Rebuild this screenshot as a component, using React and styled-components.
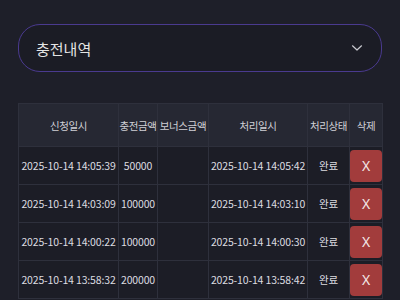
import React from 'react';
import styled, { createGlobalStyle } from 'styled-components';

const GlobalStyle = createGlobalStyle`
  html, body {
    margin: 0;
    padding: 0;
    background: #1e1f29;
  }
  body {
    font-family: "Noto Sans CJK KR", "Noto Sans", sans-serif;
    color: #dcdcdc;
  }
`;

const Page = styled.div`
  padding: 24px 18px 0;
`;

const Select = styled.div`
  height: 46px;
  display: flex;
  align-items: center;
  justify-content: space-between;
  padding: 0 18px 0 17px;
  border: 1.5px solid #4a3a8f;
  border-radius: 22px;
  background: #1b1c25;
  font-size: 15px;
  color: #e4e4e4;
`;

const Chevron = styled.svg`
  width: 12px;
  height: 8px;
  color: #c9c9d0;
`;

const Table = styled.table`
  margin-top: 31px;
  width: 364px;
  border-collapse: collapse;
  table-layout: fixed;
  font-size: 10.5px;
  letter-spacing: -0.15px;
`;

const Th = styled.th`
  height: 42px;
  padding: 0;
  background: #262833;
  border: 1px solid #2e303c;
  font-weight: 400;
  color: #d0d0d6;
  white-space: nowrap;
  text-align: center;
  letter-spacing: -0.4px;
`;

const Td = styled.td`
  height: 37px;
  padding: 0;
  background: #1c1d26;
  border: 1px solid #2e303c;
  color: #dcdce0;
  white-space: nowrap;
  text-align: center;
`;

const DeleteButton = styled.button`
  width: 32px;
  height: 32px;
  border: none;
  border-radius: 4px;
  background: #a23c3c;
  color: #f2e6e6;
  font-family: "Noto Sans", sans-serif;
  font-size: 14px;
  padding: 0;
  cursor: pointer;
`;

const rows = [
  { req: '2025-10-14 14:05:39', amount: '50000', bonus: '', done: '2025-10-14 14:05:42', status: '완료' },
  { req: '2025-10-14 14:03:09', amount: '100000', bonus: '', done: '2025-10-14 14:03:10', status: '완료' },
  { req: '2025-10-14 14:00:22', amount: '100000', bonus: '', done: '2025-10-14 14:00:30', status: '완료' },
  { req: '2025-10-14 13:58:32', amount: '200000', bonus: '', done: '2025-10-14 13:58:42', status: '완료' },
];

export default function App() {
  return (
    <Page>
      <GlobalStyle />
      <Select>
        <span>충전내역</span>
        <Chevron viewBox="0 0 12 8" fill="none" stroke="currentColor" strokeWidth="1.2" strokeLinecap="round" strokeLinejoin="round">
          <path d="M1.5 1.8 L6 6 L10.5 1.8" />
        </Chevron>
      </Select>
      <Table>
        <colgroup>
          <col style={{ width: 100 }} />
          <col style={{ width: 39 }} />
          <col style={{ width: 51 }} />
          <col style={{ width: 99 }} />
          <col style={{ width: 42 }} />
          <col style={{ width: 33 }} />
        </colgroup>
        <thead>
          <tr>
            <Th>신청일시</Th>
            <Th>충전금액</Th>
            <Th>보너스금액</Th>
            <Th>처리일시</Th>
            <Th>처리상태</Th>
            <Th>삭제</Th>
          </tr>
        </thead>
        <tbody>
          {rows.map((r, i) => (
            <tr key={i}>
              <Td>{r.req}</Td>
              <Td>{r.amount}</Td>
              <Td>{r.bonus}</Td>
              <Td>{r.done}</Td>
              <Td>{r.status}</Td>
              <Td>
                <DeleteButton>X</DeleteButton>
              </Td>
            </tr>
          ))}
        </tbody>
      </Table>
    </Page>
  );
}
